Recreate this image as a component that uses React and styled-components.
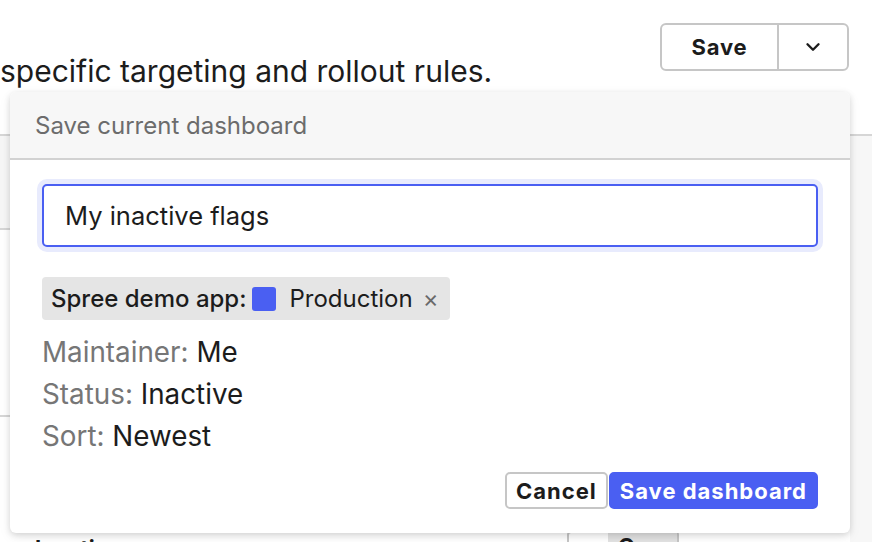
import React, { Component } from "react";
import styled, { createGlobalStyle } from "styled-components";

const Global = createGlobalStyle`
  html, body {
    margin: 0;
    padding: 0;
    background: #ffffff;
    overflow: hidden;
  }
  body {
    font-family: Inter, "Liberation Sans", sans-serif;
    color: #1c1c1c;
  }
  * { box-sizing: border-box; }
`;

const Page = styled.div`
  position: relative;
  width: 872px;
  height: 542px;
  overflow: hidden;
`;

const TopBar = styled.div`
  display: flex;
  justify-content: space-between;
  align-items: flex-start;
  padding: 23px 23px 0 0;
  height: 134px;
`;

const Description = styled.p`
  margin: 31px 0 0 0;
  font-size: 30px;
  line-height: 34px;
  color: #1c1c1c;
  white-space: nowrap;
`;

const SplitButton = styled.div`
  display: flex;
  height: 48px;
  border: 2px solid #c6c6c6;
  border-radius: 6px;
  background: #fff;
`;

const SplitPart = styled.button`
  display: flex;
  align-items: center;
  justify-content: center;
  width: ${(p) => p.w}px;
  border: none;
  background: transparent;
  font-family: inherit;
  font-weight: 700;
  font-size: 22px;
  letter-spacing: 0.8px;
  color: #1c1c1c;
  padding: 0;
  & + & {
    border-left: 2px solid #c6c6c6;
  }
`;

const Table = styled.div`
  display: flex;
  flex-direction: column;
`;

const TableRow = styled.div`
  height: ${(p) => p.h}px;
  border-top: 2px solid #d6d6d6;
  background: ${(p) => (p.shade ? "#f6f6f6" : "#fff")};
  display: flex;
  align-items: flex-start;
  padding: ${(p) => p.pt || 0}px 0 0 35px;
`;

const RightGutter = styled.div`
  position: absolute;
  top: 136px;
  right: 0;
  width: 22px;
  bottom: 0;
  background: #f7f7f7;
`;

const RowTail = styled.div`
  display: flex;
  align-items: flex-start;
  width: 100%;
  font-size: 22px;
  font-weight: 700;
`;

const TailText = styled.span`
  width: 532px;
  padding-top: 4px;
`;

const Toggle = styled.span`
  display: inline-block;
  width: 112px;
  height: 40px;
  border: 2px solid #c6c6c6;
  border-radius: 4px;
  padding-left: 39px;
`;

const ToggleOn = styled.span`
  display: inline-block;
  background: #e2e2e2;
  width: 69px;
  padding-left: 10px;
  height: 36px;
`;

const Dots = styled.span`
  margin-left: 84px;
  padding-top: 2px;
  font-size: 26px;
  letter-spacing: -2px;
`;

const Popover = styled.div`
  position: absolute;
  left: 10px;
  top: 92px;
  width: 840px;
  background: #fff;
  border-radius: 6px;
  box-shadow: 0 2px 6px rgba(0, 0, 0, 0.14), 0 4px 14px rgba(0, 0, 0, 0.06);
  overflow: hidden;
`;

const PopoverHeader = styled.div`
  height: 68px;
  display: flex;
  align-items: center;
  padding-left: 25px;
  background: #f7f7f7;
  border-bottom: 2px solid #d2d2d2;
  font-size: 24px;
  color: #6c6c6c;
`;

const PopoverBody = styled.div`
  display: flex;
  flex-direction: column;
  align-items: flex-start;
  padding: 24px 32px 24px 32px;
`;

const NameInput = styled.input`
  width: 776px;
  height: 63px;
  border: 2px solid #4a5ff2;
  border-radius: 5px;
  box-shadow: 0 0 0 5px #e8ebfd;
  padding: 0 0 0 21px;
  font-family: inherit;
  font-size: 25.5px;
  color: #1c1c1c;
  outline: none;
`;

const Chip = styled.div`
  margin-top: 30px;
  height: 43px;
  display: flex;
  align-items: center;
  background: #e5e5e5;
  border-radius: 4px;
  padding: 0 11px 0 9px;
  font-size: 24px;
  color: #1c1c1c;
`;

const ChipLabel = styled.span`
  font-weight: 500;
`;

const Swatch = styled.span`
  width: 24px;
  height: 24px;
  border-radius: 3px;
  background: ${(p) => p.color};
  margin: 0 13px 0 6px;
`;

const ChipClose = styled.span`
  margin-left: 10px;
  color: #6a6a6a;
  font-size: 24px;
`;

const FilterList = styled.div`
  margin-top: 11px;
  display: flex;
  flex-direction: column;
`;

const FilterLine = styled.div`
  font-size: 27.8px;
  line-height: 42px;
  color: #1c1c1c;
`;

const FilterKey = styled.span`
  color: #767676;
`;

const Actions = styled.div`
  align-self: flex-end;
  margin-top: 15px;
  display: flex;
  gap: 1px;
`;

const ActionButton = styled.button`
  height: 37px;
  padding: 0 ${(p) => (p.primary ? 9 : 9)}px;
  border: 2px solid ${(p) => (p.primary ? "#4a5ff2" : "#c6c6c6")};
  border-radius: 5px;
  background: ${(p) => (p.primary ? "#4a5ff2" : "#fff")};
  color: ${(p) => (p.primary ? "#fff" : "#1c1c1c")};
  font-family: inherit;
  font-weight: 700;
  font-size: 22px;
  letter-spacing: 1px;
`;

const filters = [
  { key: "Maintainer", value: "Me" },
  { key: "Status", value: "Inactive" },
  { key: "Sort", value: "Newest" }
];

export default class App extends Component {
  state = {
    name: "My inactive flags"
  };

  handleChange = (e) => {
    this.setState({ name: e.target.value });
  };

  render() {
    return (
      <Page>
        <Global />
        <TopBar>
          <Description>specific targeting and rollout rules.</Description>
          <SplitButton>
            <SplitPart w={115}>Save</SplitPart>
            <SplitPart w={70}>
              <svg width="22" height="22" viewBox="0 0 24 24" fill="none" stroke="#1c1c1c" strokeWidth="2.6" strokeLinecap="round" strokeLinejoin="round">
                <path d="M6 9l6 6 6-6" />
              </svg>
            </SplitPart>
          </SplitButton>
        </TopBar>
        <Table>
          <TableRow h={94} shade />
          <TableRow h={187} />
          <TableRow h={140} pt={114}>
            <RowTail>
              <TailText>Inactive</TailText>
              <Toggle>
                <ToggleOn>On</ToggleOn>
              </Toggle>
              <Dots>•••</Dots>
            </RowTail>
          </TableRow>
        </Table>
        <RightGutter />

        <Popover>
          <PopoverHeader>Save current dashboard</PopoverHeader>
          <PopoverBody>
            <NameInput value={this.state.name} onChange={this.handleChange} />
            <Chip>
              <ChipLabel>Spree demo app:</ChipLabel>
              <Swatch color="#4a5ff2" />
              <span>Production</span>
              <ChipClose>×</ChipClose>
            </Chip>
            <FilterList>
              {filters.map((f) => (
                <FilterLine key={f.key}>
                  <FilterKey>{f.key}: </FilterKey>
                  {f.value}
                </FilterLine>
              ))}
            </FilterList>
            <Actions>
              <ActionButton>Cancel</ActionButton>
              <ActionButton primary>Save dashboard</ActionButton>
            </Actions>
          </PopoverBody>
        </Popover>
      </Page>
    );
  }
}
